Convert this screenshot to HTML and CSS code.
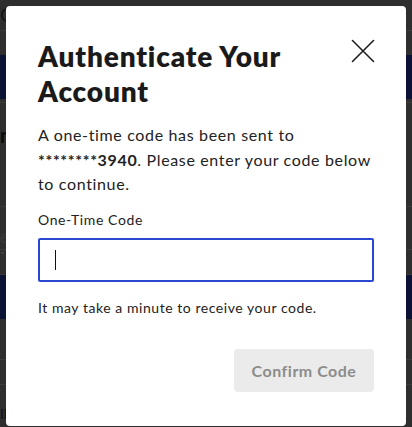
FILE: index.html
```html
<!DOCTYPE html>
<html lang="en">
<head>
<meta charset="utf-8">
<title>Authenticate Your Account</title>
<link rel="stylesheet" href="styles.css">
</head>
<body>
<div class="page">
  <div class="page-row page-row--top">C</div>
  <div class="page-row page-row--hero"></div>
  <div class="page-row page-row--mid">n</div>
  <div class="page-row page-row--field">e</div>
  <div class="page-row page-row--small">*</div>
  <div class="page-row page-row--hero2"></div>
  <div class="page-row page-row--end"></div>
  <div class="page-row page-row--foot">Il</div>
</div>
<div class="overlay">
  <div class="modal" role="dialog" aria-labelledby="modal-title">
    <div class="modal-head">
      <h1 id="modal-title" class="modal-title">Authenticate Your Account</h1>
      <button class="close-btn" aria-label="Close">
        <svg width="24" height="24" viewBox="0 0 24 24" fill="none" stroke="#1f1f1f" stroke-width="1.6" stroke-linecap="round"><path d="M1.5 1.5 L22.5 22.5 M22.5 1.5 L1.5 22.5"/></svg>
      </button>
    </div>
    <p class="modal-text">A one-time code has been sent to <strong>********3940</strong>. Please enter your code below to continue.</p>
    <label class="field-label" for="otp">One-Time Code</label>
    <div class="field-box"><span class="caret"></span></div>
    <p class="hint">It may take a minute to receive your code.</p>
    <div class="actions">
      <button class="confirm-btn" disabled>Confirm Code</button>
    </div>
  </div>
</div>
</body>
</html>
```

FILE: styles.css
```css
* { box-sizing: border-box; }
html, body { margin: 0; padding: 0; }
body {
  width: 412px;
  height: 427px;
  overflow: hidden;
  background: #2e2e2e;
  font-family: "Lato", "Open Sans", sans-serif;
}
.page {
  display: flex;
  flex-direction: column;
  height: 427px;
  color: #1a1a1a;
  font-size: 20px;
}
.page-row {
  border-bottom: 1px solid #3b3b3b;
  padding-left: 0;
  line-height: 1;
  color: #111;
}
.page-row--top { height: 31px; padding-top: 4px; color: #151515; }
.page-row--hero { height: 72px; background: linear-gradient(#2e2e2e 0 24px, #0c1233 24px 68px, #2e2e2e 68px); border-bottom: 1px solid #3b3b3b; }
.page-row--mid { height: 104px; padding-top: 22px; color: #0b0b0b; font-weight: 700; }
.page-row--field { height: 43px; padding-top: 20px; font-size: 18px; color: #3a3a3a; }
.page-row--small { height: 25px; font-size: 12px; color: #444; }
.page-row--hero2 { height: 85px; background: linear-gradient(#0c1233 0 44px, #2e2e2e 44px); }
.page-row--end { height: 25px; }
.page-row--foot { flex: 1; border-bottom: none; font-size: 14px; color: #111; padding-top: 22px; }

.overlay {
  position: fixed;
  inset: 0;
  padding: 6px;
}
.modal {
  width: 400px;
  height: 420px;
  background: #fff;
  border-radius: 4px;
  padding: 33px 32px 0 32px;
  display: flex;
  flex-direction: column;
  color: #222;
}
.modal-head {
  display: flex;
  justify-content: space-between;
  align-items: flex-start;
}
.modal-title {
  margin: 0;
  font-size: 28px;
  line-height: 35px;
  font-weight: 800;
  color: #1a1a1a;
  letter-spacing: 0.85px;
  width: 280px;
}
.close-btn {
  border: 0;
  background: none;
  padding: 0;
  margin: 0 -1px 0 0;
  width: 24px;
  height: 24px;
  cursor: pointer;
}
.close-btn svg { display: block; }
.modal-text {
  margin: 14px 0 0;
  font-size: 16px;
  line-height: 24.5px;
  color: #222;
  letter-spacing: 0.65px;
}
.modal-text strong { font-weight: 700; }
.field-label {
  display: block;
  margin-top: 13px;
  font-size: 14px;
  line-height: 20px;
  color: #222;
  letter-spacing: 0.6px;
}
.field-box {
  margin-top: 8px;
  height: 44px;
  border: 2px solid #2a48d2;
  border-radius: 2px;
  padding: 10px 15px;
}
.caret {
  display: block;
  width: 1px;
  height: 20px;
  background: #111;
}
.hint {
  margin: 16px 0 0;
  font-size: 14px;
  line-height: 20px;
  color: #222;
  letter-spacing: 0.55px;
}
.actions {
  display: flex;
  justify-content: flex-end;
  margin-top: 31px;
}
.confirm-btn {
  width: 140px;
  height: 43px;
  border: 0;
  border-radius: 4px;
  background: #ebebeb;
  color: #8c8c8c;
  font-family: inherit;
  font-size: 16px;
  font-weight: 700;
  letter-spacing: 0.5px;
}
```
